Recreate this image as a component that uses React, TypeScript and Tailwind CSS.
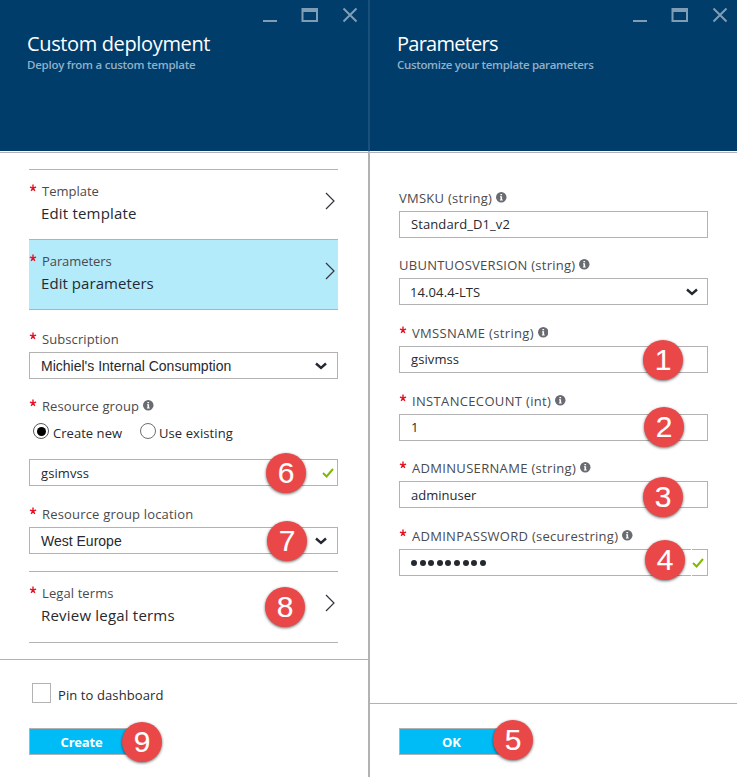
import type { ReactNode } from "react";

function WindowControls() {
  return (
    <svg width="96" height="16" viewBox="0 0 96 16" fill="none" stroke="#809db6">
      <path d="M0 14h14" strokeWidth="2" />
      <path d="M38.500 1h16.500v14h-16.500z M40.500 5v8h12.500v-8z" fill="#809db6" fillRule="evenodd" stroke="none" />
      <path d="M80.500 1.500l13 13M93.500 1.500l-13 13" strokeWidth="2" />
    </svg>
  );
}

function Header({ title, subtitle, titleClass, subtitleClass, controlsClass }: { title: string; subtitle: string; titleClass: string; subtitleClass: string; controlsClass: string }) {
  return (
    <header className="h-[151px] shrink-0 bg-[#003d6b] pl-[27px] pt-[7px]">
      <div className={`flex h-[23px] justify-end ${controlsClass}`}>
        <WindowControls />
      </div>
      <h1 className={`h-7 whitespace-nowrap text-[20px] leading-[27px] text-white ${titleClass}`}>{title}</h1>
      <p className={`h-4 whitespace-nowrap text-[11.5px] font-semibold leading-[14px] text-[#8fb0c9] ${subtitleClass}`}>{subtitle}</p>
    </header>
  );
}

function InfoIcon() {
  return (
    <svg className="ml-1 mt-[-1px] shrink-0" width="10.500" height="10.500" viewBox="0 0 10 10">
      <circle cx="5" cy="5" r="5" fill="#686b70" />
      <path d="M4.2 1.8h1.6v1.4H4.2zM3.8 4.1h2v3h.6v1H3.7v-1h.6V5h-.5z" fill="#fff" />
    </svg>
  );
}

function Star() {
  return (
    <svg className="mr-[5px] mt-[-7px] shrink-0" width="8" height="8" viewBox="0 0 8 8" stroke="#e81123" strokeWidth="1.4">
      <path d="M4 4V.6M4 4L.9 3.1M4 4l3.1-.9M4 4L2.2 6.800M4 4l1.800 2.800" />
    </svg>
  );
}

function Label({ children, required = false, info = false, className = "" }: { children: ReactNode; required?: boolean; info?: boolean; className?: string }) {
  return (
    <div className="flex h-5 items-center text-[13px] leading-5 text-[#4a4a4e]">
      {required && <Star />}
      <span className={`whitespace-nowrap ${className}`}>{children}</span>
      {info && <InfoIcon />}
    </div>
  );
}

function Badge({ n, className }: { n: number; className: string }) {
  return (
    <span
      className={`absolute z-10 flex size-10 items-center justify-center rounded-full bg-[#e94748] pb-px font-['Liberation_Sans',sans-serif] text-[30px] leading-none text-white shadow-[0_1px_3px_rgba(0,0,0,0.6)] [-webkit-text-stroke:0.15px_white] ${className}`}
    >
      {n}
    </span>
  );
}

function Chevron() {
  return (
    <svg className="mr-[3px]" width="10" height="18" viewBox="0 0 10 18" fill="none" stroke="#33363c" strokeWidth="1.2">
      <path d="M1 1l8 8-8 8" />
    </svg>
  );
}

function Caret({ className = "mr-[10px]" }: { className?: string }) {
  return (
    <svg className={className} width="12" height="8" viewBox="0 0 12 8" fill="none" stroke="#24282f" strokeWidth="2.4">
      <path d="M1 1.5l5 4.500 5-4.500" />
    </svg>
  );
}

function Check() {
  return (
    <svg className="mr-[3px] mt-px" width="12" height="10" viewBox="0 0 12 10" fill="none" stroke="#7fba00" strokeWidth="2">
      <path d="M1 5l3.6 3.5L11 1" />
    </svg>
  );
}

function Box({ children, icon, badge, className = "" }: { children: ReactNode; icon?: ReactNode; badge?: ReactNode; className?: string }) {
  return (
    <div className="relative flex h-[27px] items-center justify-between border border-[#b2b2b2] bg-white pl-[11px] text-[13px] leading-5 text-[#26292f]">
      <span className={`whitespace-nowrap ${className}`}>{children}</span>
      {icon}
      {badge}
    </div>
  );
}

function NavRow({ label, value, labelClass = "", valueClass = "", children, className = "" }: { label: string; value: string; labelClass?: string; valueClass?: string; children?: ReactNode; className?: string }) {
  return (
    <div className={`relative flex justify-between border-t border-[#b2b2b2] pt-[11px] ${className}`}>
      <div>
        <Label required className={labelClass}>{label}</Label>
        <div className={`h-6 whitespace-nowrap pl-3 text-[15px] leading-6 text-[#26292f] ${valueClass}`}>{value}</div>
      </div>
      <div className="pt-[11px]">
        <Chevron />
      </div>
      {children}
    </div>
  );
}

function ActionButton({ children, badge, className = "" }: { children: ReactNode; badge: ReactNode; className?: string }) {
  return (
    <div className="relative w-[105px]">
      <button className={`block h-[27px] w-full border border-[#b2b2b2] bg-[#00bcf6] text-[13px] font-bold leading-6 text-white ${className}`}>{children}</button>
      {badge}
    </div>
  );
}

export default function App() {
  return (
    <div className="flex h-[777px] w-[737px] overflow-hidden bg-white font-['Open_Sans',sans-serif]">
      <section className="flex w-[368px] shrink-0 flex-col">
        <Header title="Custom deployment" subtitle="Deploy from a custom template" titleClass="tracking-[-0.36px]" subtitleClass="tracking-[-0.26px]" controlsClass="pr-[9px]" />
        <div className="mt-px h-px shrink-0 bg-[#b5afaf]" />
        <div className="flex h-[490px] w-[338px] flex-col pl-[29px] pt-4">
          <NavRow className="h-[70px]" label="Template" value="Edit template" valueClass="tracking-[0.18px]" />
          <NavRow className="h-[71px] border-b bg-[#b3ebfb]" label="Parameters" labelClass="tracking-[-0.08px]" value="Edit parameters" valueClass="tracking-[0.06px]" />
          <div className="mt-[19px]">
            <Label required className="tracking-[0.08px]">Subscription</Label>
            <div className="h-[3px]" />
            <Box className="font-['Liberation_Sans',sans-serif] text-[14px]" icon={<Caret />}>Michiel's Internal Consumption</Box>
          </div>
          <div className="mt-[17px]">
            <Label required info className="tracking-[0.1px]">Resource group</Label>
            <div className="flex h-[30px] items-center pl-1 text-[13px] text-[#26292f]">
              <span className="flex size-4 items-center justify-center rounded-full border border-[#55585c]">
                <span className="size-[9px] rounded-full bg-black" />
              </span>
              <span className="ml-1 mt-[5px] w-[87px] whitespace-nowrap tracking-[0.04px]">Create new</span>
              <span className="size-4 rounded-full border border-[#6c6f73]" />
              <span className="ml-[3px] mt-[5px] whitespace-nowrap tracking-[0.08px]">Use existing</span>
            </div>
            <div className="h-[13px]" />
            <Box className="tracking-[0.1px]" icon={<Check />} badge={<Badge n={6} className="left-[236px] top-[-7px]" />}>gsimvss</Box>
          </div>
          <div className="mt-[18px]">
            <Label required className="tracking-[0.18px]">Resource group location</Label>
            <div className="h-[3px]" />
            <Box className="font-['Liberation_Sans',sans-serif] text-[14px]" icon={<Caret />} badge={<Badge n={7} className="left-[237px] top-[-7px]" />}>West Europe</Box>
          </div>
          <NavRow className="mt-[17px] h-[72px] shrink-0 border-b" label="Legal terms" labelClass="tracking-[0.1px]" value="Review legal terms" valueClass="tracking-[0.2px]">
            <Badge n={8} className="left-[236px] top-[15px]" />
          </NavRow>
        </div>
        <footer className="mt-4 flex-1 border-t border-[#b2b2b2] pl-[29px] pt-[23px]">
          <div className="flex h-5 items-center pl-[3px] text-[13px] text-[#26292f]">
            <span className="h-5 w-[19px] border border-[#b2b2b2]" />
            <span className="ml-[7px] mt-[5px] whitespace-nowrap tracking-[0.1px]">Pin to dashboard</span>
          </div>
          <div className="h-[25px]" />
          <ActionButton className="tracking-[-0.2px]" badge={<Badge n={9} className="left-[93px] top-[-6px]" />}>Create</ActionButton>
        </footer>
      </section>

      <div className="flex w-0.5 shrink-0 flex-col">
        <div className="h-[151px] bg-[#1a507b]" />
        <div className="flex-1 bg-[#b2b2b2]" />
      </div>

      <section className="flex w-[367px] shrink-0 flex-col">
        <Header title="Parameters" subtitle="Customize your template parameters" titleClass="tracking-[-0.75px]" subtitleClass="tracking-[-0.33px]" controlsClass="pr-2" />
        <div className="mt-px h-px shrink-0 bg-[#b5afaf]" />
        <div className="flex h-[550px] w-[338px] flex-col pl-[29px] pt-[35px]">
          <Label info className="tracking-[0.26px]">VMSKU (string)</Label>
          <div className="h-[3px]" />
          <Box className="-mt-0.5 tracking-[0.1px]">Standard_D1_v2</Box>
          <div className="h-[17px]" />
          <Label info className="tracking-[0.26px]">UBUNTUOSVERSION (string)</Label>
          <div className="h-[3px]" />
          <Box className="-ml-px tracking-[0.1px]" icon={<Caret className="mr-[9px]" />}>14.04.4-LTS</Box>
          <div className="h-[18px]" />
          <Label required info className="tracking-[0.34px]">VMSSNAME (string)</Label>
          <div className="h-[3px]" />
          <Box className="-mt-0.5 tracking-[0.1px]" badge={<Badge n={1} className="left-[243px] top-[-7px]" />}>gsivmss</Box>
          <div className="h-[18px]" />
          <Label required info className="tracking-[0.34px]">INSTANCECOUNT (int)</Label>
          <div className="h-[3px]" />
          <Box className="-mt-0.5" badge={<Badge n={2} className="left-[244px] top-[-8px]" />}>1</Box>
          <div className="h-[17px]" />
          <Label required info className="tracking-[0.32px]">ADMINUSERNAME (string)</Label>
          <div className="h-[3px]" />
          <Box badge={<Badge n={3} className="left-[243px] top-[-5px]" />}>adminuser</Box>
          <div className="h-[18px]" />
          <Label required info className="tracking-[0.28px]">ADMINPASSWORD (securestring)</Label>
          <div className="h-[3px]" />
          <Box
            className="flex h-4 items-center gap-[2.6px]"
            icon={<Check />}
            badge={
              <>
                <span className="absolute -top-px left-[291px] h-[27px] w-px bg-white" />
                <Badge n={4} className="left-[245px] top-[-10px]" />
              </>
            }
          >
            {Array.from({ length: 9 }, (_, i) => (
              <span key={i} className="block size-[6px] rounded-full bg-[#24282f]" />
            ))}
          </Box>
        </div>
        <footer className="flex-1 border-t border-[#b2b2b2] pl-[29px] pt-6">
          <ActionButton badge={<Badge n={5} className="left-[94px] top-[-8px]" />}>OK</ActionButton>
        </footer>
      </section>
    </div>
  );
}
